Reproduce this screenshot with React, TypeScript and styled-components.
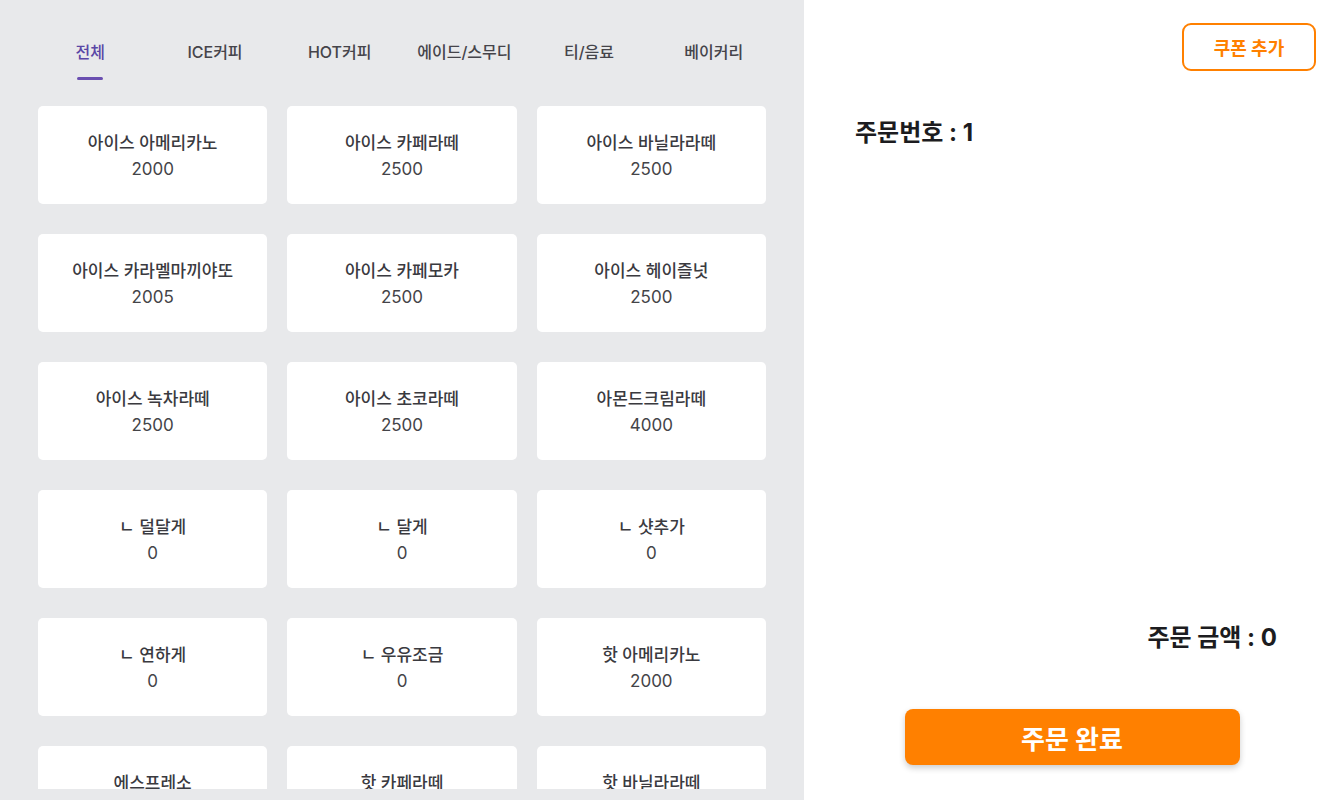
import React, { useState } from "react";
import styled, { createGlobalStyle } from "styled-components";

const GlobalStyle = createGlobalStyle`
  html, body {
    margin: 0;
    padding: 0;
    font-family: Inter, "Noto Sans CJK KR", sans-serif;
    background: #ffffff;
  }
  * { box-sizing: border-box; }
`;

const categories = ["전체", "ICE커피", "HOT커피", "에이드/스무디", "티/음료", "베이커리"];

const menu = [
  { name: "아이스 아메리카노", price: 2000 },
  { name: "아이스 카페라떼", price: 2500 },
  { name: "아이스 바닐라라떼", price: 2500 },
  { name: "아이스 카라멜마끼야또", price: 2005 },
  { name: "아이스 카페모카", price: 2500 },
  { name: "아이스 헤이즐넛", price: 2500 },
  { name: "아이스 녹차라떼", price: 2500 },
  { name: "아이스 초코라떼", price: 2500 },
  { name: "아몬드크림라떼", price: 4000 },
  { name: "ㄴ 덜달게", price: 0 },
  { name: "ㄴ 달게", price: 0 },
  { name: "ㄴ 샷추가", price: 0 },
  { name: "ㄴ 연하게", price: 0 },
  { name: "ㄴ 우유조금", price: 0 },
  { name: "핫 아메리카노", price: 2000 },
  { name: "에스프레소", price: 2000 },
  { name: "핫 카페라떼", price: 2500 },
  { name: "핫 바닐라라떼", price: 2500 },
];

export default function App() {
  const [active, setActive] = useState(0);
  return (
    <>
      <GlobalStyle />
      <Page>
        <MenuPanel>
          <TabBar>
            {categories.map((c, i) => (
              <Tab key={c} $active={i === active} onClick={() => setActive(i)}>
                {c}
                <Underline $active={i === active} />
              </Tab>
            ))}
          </TabBar>
          <ListArea>
            <Grid>
              {menu.map((m) => (
                <Card key={m.name}>
                  <ItemName>{m.name}</ItemName>
                  <ItemPrice>{m.price}</ItemPrice>
                </Card>
              ))}
            </Grid>
          </ListArea>
        </MenuPanel>
        <OrderPanel>
          <CouponButton>쿠폰 추가</CouponButton>
          <OrderNumber>주문번호 : 1</OrderNumber>
          <Spacer />
          <Total>주문 금액 : 0</Total>
          <CompleteButton>주문 완료</CompleteButton>
        </OrderPanel>
      </Page>
    </>
  );
}

const Page = styled.div`
  display: flex;
  width: 1340px;
  height: 800px;
  overflow: hidden;
`;

const MenuPanel = styled.section`
  display: flex;
  flex-direction: column;
  width: 804px;
  height: 100%;
  padding: 0 38px 11px;
  background-color: #e8e9eb;
`;

const TabBar = styled.nav`
  display: flex;
  margin: 0 -10px;
`;

const Tab = styled.button<{ $active: boolean }>`
  flex: 1;
  display: flex;
  flex-direction: column;
  align-items: center;
  gap: 14px;
  padding: 41px 0 0;
  border: none;
  background: none;
  font-family: inherit;
  font-size: 16px;
  line-height: 22px;
  font-weight: 500;
  color: ${(p) => (p.$active ? "#5a47a6" : "#45444a")};
  cursor: pointer;
`;

const Underline = styled.span<{ $active: boolean }>`
  width: 26px;
  height: 3px;
  border-radius: 2px;
  background-color: ${(p) => (p.$active ? "#6a4fb0" : "transparent")};
`;

const ListArea = styled.div`
  flex: 1;
  margin-top: 26px;
  overflow: hidden;
`;

const Grid = styled.div`
  display: grid;
  grid-template-columns: repeat(3, 1fr);
  column-gap: 20px;
  row-gap: 30px;
`;

const Card = styled.div`
  display: flex;
  flex-direction: column;
  align-items: center;
  justify-content: center;
  gap: 4px;
  height: 98px;
  padding-top: 2px;
  background-color: #ffffff;
  border-radius: 5px;
`;

const ItemName = styled.span`
  font-size: 17px;
  line-height: 22px;
  font-weight: 500;
  color: #3a3a3f;
`;

const ItemPrice = styled.span`
  font-size: 17px;
  line-height: 22px;
  font-weight: 400;
  color: #444448;
`;

const OrderPanel = styled.section`
  flex: 1;
  display: flex;
  flex-direction: column;
  padding: 23px 24px 35px;
  background-color: #ffffff;
`;

const CouponButton = styled.button`
  align-self: flex-end;
  width: 134px;
  height: 48px;
  border: 2px solid #ff8000;
  border-radius: 9px;
  background: #ffffff;
  color: #ff8000;
  font-family: inherit;
  font-size: 18px;
  font-weight: 700;
  cursor: pointer;
`;

const OrderNumber = styled.h2`
  margin: 50px 0 0 27px;
  font-size: 24px;
  line-height: 24px;
  font-weight: 700;
  color: #1c1c20;
`;

const Spacer = styled.div`
  flex: 1;
`;

const Total = styled.div`
  align-self: flex-end;
  margin-right: 39px;
  font-size: 24px;
  line-height: 24px;
  font-weight: 700;
  color: #1c1c20;
`;

const CompleteButton = styled.button`
  align-self: center;
  width: 335px;
  height: 56px;
  margin-top: 59px;
  border: none;
  border-radius: 8px;
  background-color: #ff8000;
  color: #ffffff;
  font-family: inherit;
  font-size: 26px;
  font-weight: 700;
  box-shadow: 0 3px 6px rgba(0, 0, 0, 0.2);
  cursor: pointer;
`;
